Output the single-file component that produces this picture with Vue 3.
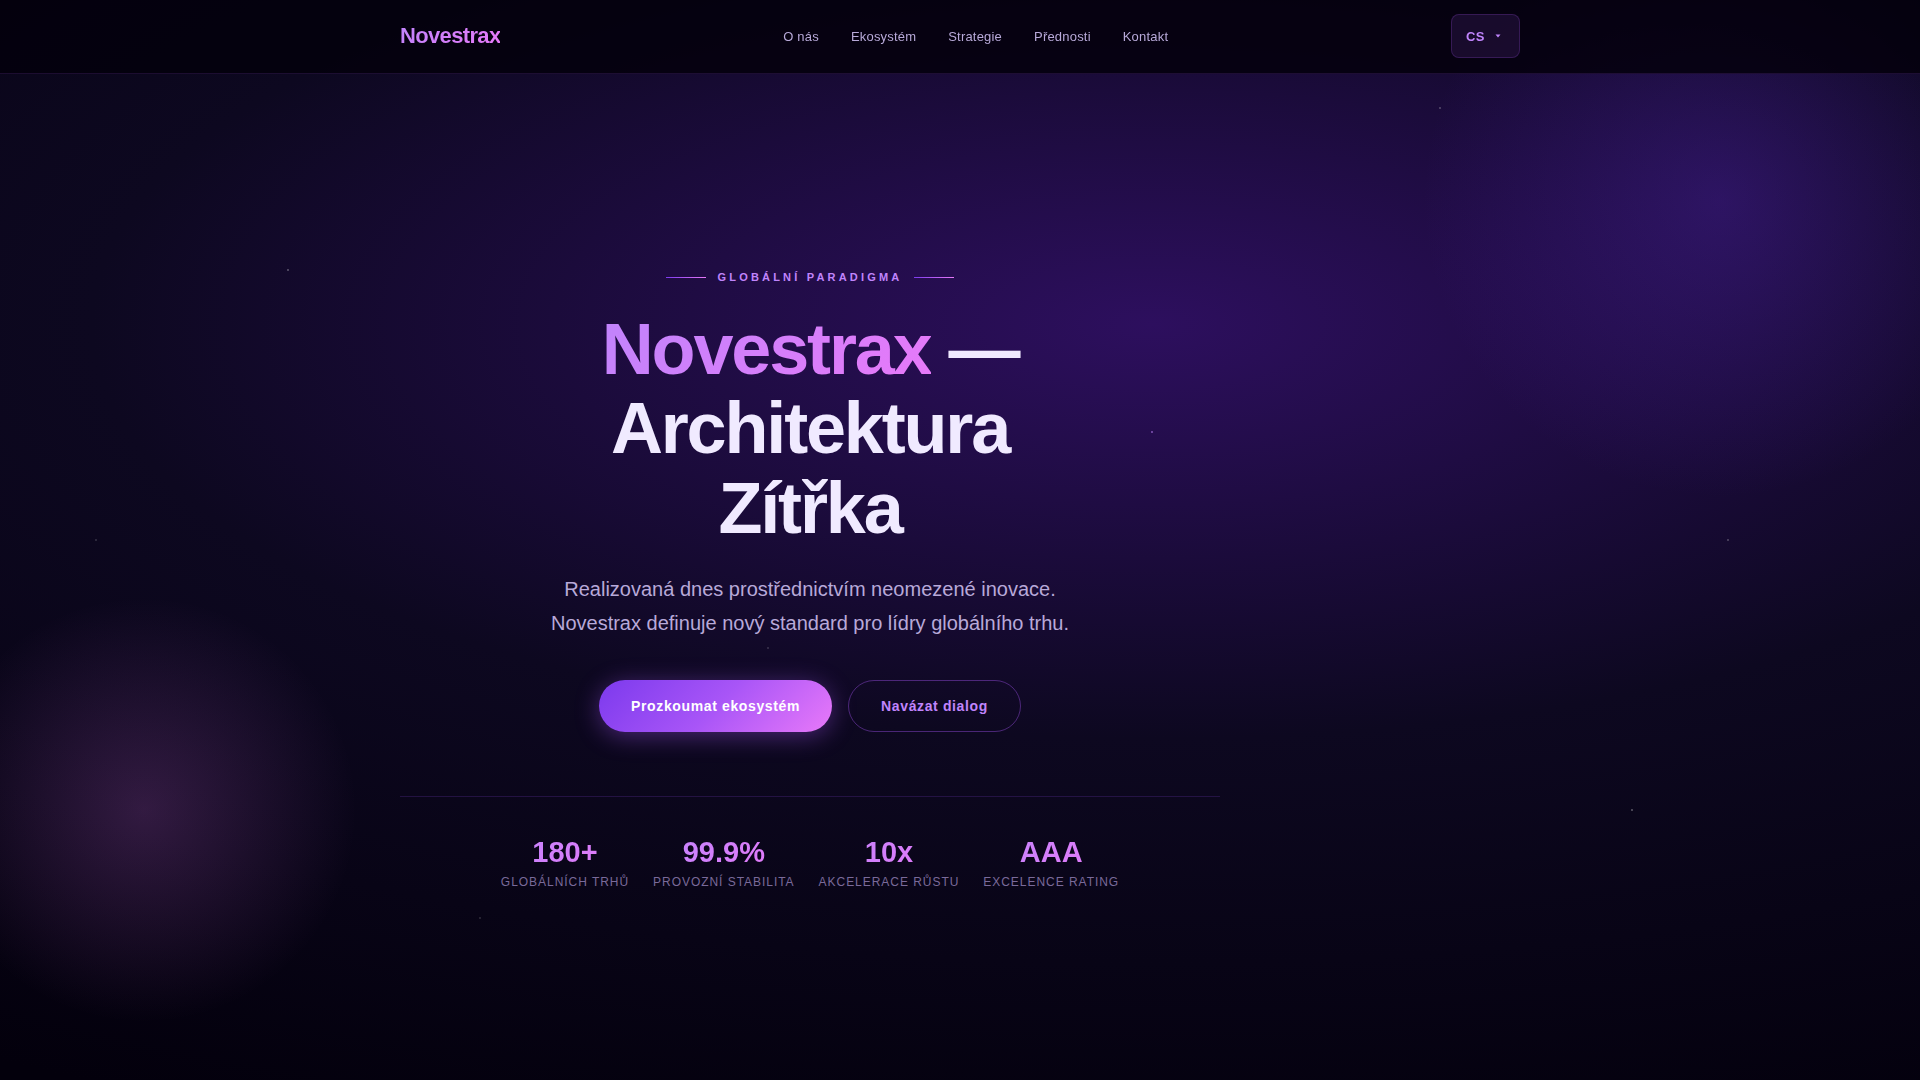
<script setup>
import { ref } from 'vue'

const language = ref('cs')

const links = [
  { label: 'O nás', href: '#o-nas' },
  { label: 'Ekosystém', href: '#ekosystem' },
  { label: 'Strategie', href: '#strategie' },
  { label: 'Přednosti', href: '#prednosti' },
  { label: 'Kontakt', href: '#kontakt' },
]

const stats = [
  { value: '180+', label: 'Globálních trhů' },
  { value: '99.9%', label: 'Provozní stabilita' },
  { value: '10x', label: 'Akcelerace růstu' },
  { value: 'AAA', label: 'Excelence rating' },
]
</script>

<template>
  <div class="page">
    <header class="header">
      <div class="header-inner">
        <a class="logo gradient-text" href="#">Novestrax</a>
        <nav class="nav">
          <a v-for="link in links" :key="link.href" class="nav-link" :href="link.href">{{ link.label }}</a>
        </nav>
        <div class="lang">
          <select v-model="language" class="lang-select" aria-label="Jazyk">
            <option value="cs">CS</option>
          </select>
          <svg class="lang-caret" width="6" height="4" viewBox="0 0 6 4" aria-hidden="true">
            <path d="M0.5 0.5h5L3 3.5z" fill="currentColor" />
          </svg>
        </div>
      </div>
    </header>

    <main class="hero">
      <div class="stars"></div>
      <div class="orb orb-violet"></div>
      <div class="orb orb-pink"></div>

      <div class="hero-inner">
        <div class="hero-content">
          <p class="eyebrow"><span>Globální paradigma</span></p>
          <h1 class="title">
            <span class="title-line"><span class="gradient-text">Novestrax</span> —</span>
            <span class="title-line">Architektura</span>
            <span class="title-line">Zítřka</span>
          </h1>
          <p class="lead">
            Realizovaná dnes prostřednictvím neomezené inovace. Novestrax definuje nový standard pro lídry globálního trhu.
          </p>
          <div class="actions">
            <button type="button" class="btn btn-primary">Prozkoumat ekosystém</button>
            <button type="button" class="btn btn-outline">Navázat dialog</button>
          </div>
          <dl class="stats">
            <div v-for="stat in stats" :key="stat.label" class="stat">
              <dd class="stat-value gradient-text">{{ stat.value }}</dd>
              <dt class="stat-label">{{ stat.label }}</dt>
            </div>
          </dl>
        </div>
      </div>
    </main>
  </div>
</template>

<style>
body {
  margin: 0;
  background: #030008;
}
</style>

<style scoped>
.page {
  font-family: "Liberation Sans", Arial, sans-serif;
  color: #f0eaff;
}

.gradient-text {
  background: linear-gradient(135deg, #c084fc, #e879f9);
  background-clip: text;
  -webkit-background-clip: text;
  color: transparent;
}

.header {
  position: fixed;
  inset: 0 0 auto;
  z-index: 10;
  background: rgba(3, 0, 12, 0.85);
  border-bottom: 1px solid rgba(168, 85, 247, 0.15);
}

.header-inner {
  display: flex;
  align-items: center;
  justify-content: space-between;
  box-sizing: border-box;
  max-width: 1200px;
  margin: 0 auto;
  padding: 14px 40px 15px;
}

.logo {
  font-size: 22px;
  font-weight: 700;
  letter-spacing: -0.03em;
  text-decoration: none;
}

.nav {
  display: flex;
  gap: 32px;
}

.nav-link {
  font-size: 13px;
  letter-spacing: 0.015em;
  color: #b8a9d9;
  text-decoration: none;
}

.lang {
  position: relative;
  color: #c084fc;
}

.lang-select {
  appearance: none;
  display: block;
  box-sizing: border-box;
  width: 69px;
  height: 44px;
  padding: 0 14px;
  border: 1px solid rgba(168, 85, 247, 0.2);
  border-radius: 8px;
  background: rgba(168, 85, 247, 0.12);
  color: inherit;
  font: 700 13px "Liberation Sans", Arial, sans-serif;
  letter-spacing: 0.02em;
}

.lang-caret {
  position: absolute;
  top: 20px;
  right: 19px;
  pointer-events: none;
}

.hero {
  position: relative;
  display: flex;
  align-items: center;
  box-sizing: border-box;
  min-height: 100vh;
  padding: 120px 0 40px;
  overflow: hidden;
  background: radial-gradient(ellipse 115% 80% at 60% 30%, #2d0f5e 0%, #0d0820 48%, #03000c 100%);
}

.stars {
  position: absolute;
  inset: 0;
  background:
    radial-gradient(1px 1px at 15% 25%, rgba(255, 255, 255, 0.24) 99%, transparent),
    radial-gradient(1px 1px at 75% 10%, rgba(255, 255, 255, 0.2) 99%, transparent),
    radial-gradient(1px 1px at 60% 40%, rgba(192, 132, 252, 0.45) 99%, transparent),
    radial-gradient(1px 1px at 5% 50%, rgba(255, 255, 255, 0.13) 99%, transparent),
    radial-gradient(1px 1px at 90% 50%, rgba(255, 255, 255, 0.2) 99%, transparent),
    radial-gradient(1px 1px at 40% 60%, rgba(255, 255, 255, 0.13) 99%, transparent),
    radial-gradient(1px 1px at 85% 75%, rgba(255, 255, 255, 0.25) 99%, transparent),
    radial-gradient(1px 1px at 25% 85%, rgba(255, 255, 255, 0.12) 99%, transparent);
}

.orb {
  position: absolute;
  border-radius: 50%;
}

.orb-violet {
  top: -100px;
  right: -100px;
  width: 600px;
  height: 600px;
  background: radial-gradient(circle, rgba(88, 40, 190, 0.32) 0%, transparent 70%);
}

.orb-pink {
  bottom: 55px;
  left: -71px;
  width: 430px;
  height: 430px;
  background: radial-gradient(circle, rgba(232, 121, 249, 0.19) 0%, transparent 70%);
}

.hero-inner {
  position: relative;
  box-sizing: border-box;
  width: 100%;
  max-width: 1200px;
  margin: 0 auto;
  padding: 0 40px;
}

.hero-content {
  max-width: 820px;
  text-align: center;
}

.eyebrow {
  display: flex;
  align-items: center;
  justify-content: center;
  gap: 12px;
  margin: 0 0 26px;
  font-size: 11px;
  line-height: 14px;
  font-weight: 700;
  letter-spacing: 0.29em;
  text-transform: uppercase;
  color: #c084fc;
}

.eyebrow::before,
.eyebrow::after {
  content: "";
  width: 40px;
  height: 1px;
  background: linear-gradient(90deg, #7c3aed, #e879f9);
}

.title {
  margin: 0 0 24px;
  font-size: 72px;
  line-height: 1.1;
  font-weight: 700;
  letter-spacing: -0.03em;
}

.title-line {
  display: block;
}

.lead {
  max-width: 560px;
  margin: 0 auto 40px;
  font-size: 20px;
  line-height: 34px;
  color: #b8a9d9;
}

.actions {
  display: flex;
  flex-wrap: wrap;
  justify-content: center;
  gap: 16px;
}

.btn {
  height: 52px;
  padding: 0 32px;
  border: 0;
  border-radius: 26px;
  font: 700 14px "Liberation Sans", Arial, sans-serif;
  letter-spacing: 0.045em;
  cursor: pointer;
}

.btn-primary {
  background: linear-gradient(135deg, #7c3aed, #a855f7 50%, #e879f9);
  box-shadow: 0 4px 24px rgba(168, 85, 247, 0.4);
  color: #fff;
}

.btn-outline {
  border: 1px solid rgba(168, 85, 247, 0.4);
  background: transparent;
  color: #c084fc;
}

.stats {
  display: flex;
  flex-wrap: wrap;
  justify-content: center;
  gap: 24px;
  margin: 64px 0 0;
  padding-top: 40px;
  border-top: 1px solid rgba(150, 75, 247, 0.18);
}

.stat-value {
  margin: 0 0 8px;
  font-size: 29px;
  line-height: 30px;
  font-weight: 700;
}

.stat-label {
  font-size: 12px;
  line-height: 15px;
  letter-spacing: 0.08em;
  text-transform: uppercase;
  color: #7a6a9a;
}
</style>
